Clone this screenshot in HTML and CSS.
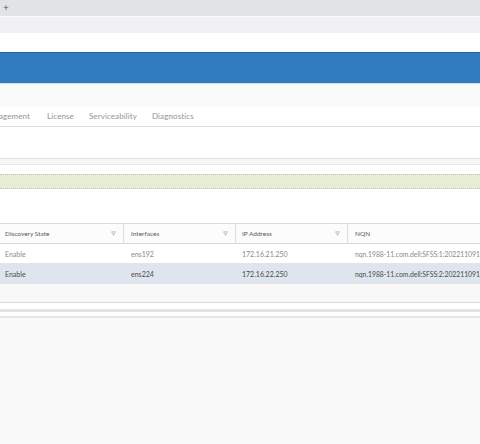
FILE: index.html
```html
<!DOCTYPE html>
<html>
<head>
<meta charset="utf-8">
<link rel="stylesheet" href="styles.css">
</head>
<body>
<div class="page">
  <div class="tabstrip"><span class="plus">+</span></div>
  <div class="addrbar"></div>
  <div class="toolbar"></div>
  <div class="appheader"></div>
  <div class="subheader"></div>
  <nav class="tabs">
    <span class="tab cut">agement</span>
    <span class="tab">License</span>
    <span class="tab">Serviceability</span>
    <span class="tab">Diagnostics</span>
  </nav>
  <div class="panel"></div>
  <div class="gap"></div>
  <div class="spacer1"></div>
  <div class="alert"></div>
  <div class="spacer2"></div>
  <div class="grid">
    <div class="row head">
      <div class="cell c1">Discovery State<svg class="filter" viewBox="0 0 6 6"><path d="M0.5 1h5L3.5 3.3V5.2L2.5 4.6V3.3z" fill="none" stroke="#9a9a9a" stroke-width="0.7"/></svg></div>
      <div class="cell c2">Interfaces<svg class="filter" viewBox="0 0 6 6"><path d="M0.5 1h5L3.5 3.3V5.2L2.5 4.6V3.3z" fill="none" stroke="#9a9a9a" stroke-width="0.7"/></svg></div>
      <div class="cell c3">IP Address<svg class="filter" viewBox="0 0 6 6"><path d="M0.5 1h5L3.5 3.3V5.2L2.5 4.6V3.3z" fill="none" stroke="#9a9a9a" stroke-width="0.7"/></svg></div>
      <div class="cell c4">NQN</div>
    </div>
    <div class="row">
      <div class="cell c1">Enable</div>
      <div class="cell c2">ens192</div>
      <div class="cell c3">172.16.21.250</div>
      <div class="cell c4">nqn.1988-11.com.dell:SFSS:1:20221109122</div>
    </div>
    <div class="row selected">
      <div class="cell c1">Enable</div>
      <div class="cell c2">ens224</div>
      <div class="cell c3">172.16.22.250</div>
      <div class="cell c4">nqn.1988-11.com.dell:SFSS:2:20221109122</div>
    </div>
    <div class="grid-empty"></div>
  </div>
  <div class="foot1"></div>
  <div class="foot2"></div>
  <div class="foot3"></div>
  <div class="foot4"></div>
</div>
</body>
</html>
```
FILE: styles.css
```css
html, body {
  margin: 0;
  padding: 0;
  width: 480px;
  height: 444px;
  overflow: hidden;
  background: #f9f9f9;
  font-family: Lato, "Open Sans", sans-serif;
}
.page {
  width: 480px;
  display: flex;
  flex-direction: column;
}
.tabstrip {
  height: 16px;
  background: #e2e3e7;
  display: flex;
  align-items: center;
}
.plus {
  font-size: 10px;
  line-height: 10px;
  color: #4f5d6c;
  margin-left: 3px;
  margin-top: -2px;
}
.addrbar {
  height: 16px;
  background: #f1f1f3;
  border-top: 1px solid #fbfbfc;
}
.toolbar {
  height: 19px;
  background: #ffffff;
}
.appheader {
  height: 30px;
  background: #307cbf;
  border-top: 1px solid #2162a0;
  border-bottom: 1px solid #d2dde8;
}
.subheader {
  height: 22px;
  background: #fafafa;
}
.tabs {
  height: 20px;
  background: #ffffff;
  border-bottom: 1px solid #dcdcdc;
  display: flex;
  align-items: center;
  font-size: 8px;
  color: #939393;
}
.tab { margin-right: 15px; letter-spacing: 0.1px; }
.tab.cut { margin-left: -1px; margin-right: 17px; }
.panel {
  height: 31px;
  background: #ffffff;
  border-bottom: 1px solid #e2e2e2;
}
.gap {
  height: 5px;
  background: #f7f7f7;
  border-bottom: 1px solid #e9e9e9;
}
.spacer1 {
  height: 9px;
  background: #ffffff;
}
.alert {
  height: 13px;
  background: #e5edd7;
  border-top: 1px dotted #bfc9a8;
  border-bottom: 1px dotted #bfc9a8;
}
.spacer2 {
  height: 34px;
  background: #ffffff;
}
.grid {
  background: #ffffff;
  border-top: 1px solid #dcdcdc;
  border-bottom: 1px solid #dcdcdc;
}
.row {
  display: flex;
  height: 19px;
  align-items: center;
  border-bottom: 1px solid #e4e4e4;
  font-size: 7px;
  color: #8a8a8a;
  white-space: nowrap;
}
.row.head {
  height: 19px;
  color: #5a5a5a;
  font-size: 6.5px;
  background: #fcfcfc;
  border-bottom: 1px solid #d6d6d6;
}
.row.selected {
  background: #dfe5ee;
  color: #4a4a4a;
}
.cell {
  height: 100%;
  display: flex;
  align-items: center;
  padding-left: 5px;
  box-sizing: border-box;
  flex-shrink: 0;
}
.c1 { width: 124px; }
.c2 { width: 112px; padding-left: 7px; }
.c3 { width: 112px; padding-left: 6px; }
.c4 { flex: 1 1 auto; min-width: 0; overflow: hidden; padding-left: 7px; font-size: 6.8px; }
.head .c4 { font-size: 6.5px; }
.head .c1, .head .c2, .head .c3 { border-right: 1px solid #dedede; }
.filter {
  width: 5px;
  height: 5px;
  margin-left: auto;
  margin-right: 7px;
}
.grid-empty {
  height: 18px;
  background: #f8f8f8;
}
.foot1 { height: 6px; background: #ffffff; }
.foot2 { height: 3px; background: #e3e3e3; }
.foot3 { height: 4px; background: #ffffff; }
.foot4 { height: 2px; background: #e6e6e6; }
```
